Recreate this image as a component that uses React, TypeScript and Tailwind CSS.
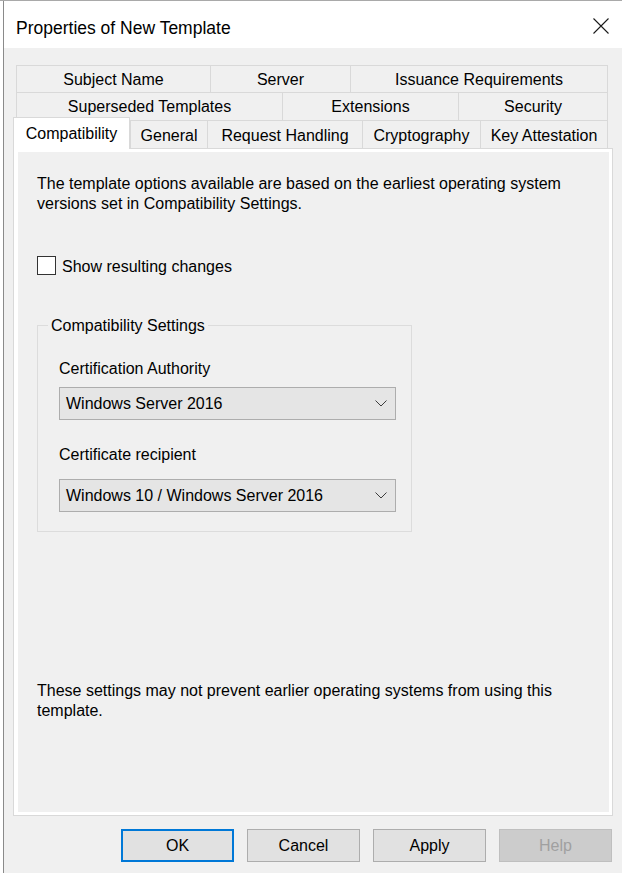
import React from 'react';

const font = "font-['Liberation_Sans',Arial,sans-serif]";

const rowOne = [
  { label: 'Subject Name', cls: 'w-[194px] pt-[1px]' },
  { label: 'Server', cls: 'w-[140px] pt-[1px]' },
  { label: 'Issuance Requirements', cls: 'flex-1 border-r pt-[1px]' },
];

const rowTwo = [
  { label: 'Superseded Templates', cls: 'w-[266px] pt-[1px]' },
  { label: 'Extensions', cls: 'w-[176px] pt-[1px]' },
  { label: 'Security', cls: 'flex-1 border-r pt-[1px]' },
];

const rowThree = [
  { label: 'General', cls: 'w-[77px] pt-[3px]' },
  { label: 'Request Handling', cls: 'w-[155px] pt-[3px]' },
  { label: 'Cryptography', cls: 'w-[118px] pt-[3px]' },
  { label: 'Key Attestation', cls: 'w-[128px] border-r pt-[3px]' },
];

const Tab = ({ label, cls }: { label: string; cls: string }) => (
  <div className={`flex items-center justify-center border-t border-l border-[#d9d9d9] bg-[#f0f0f0] ${cls}`}>
    {label}
  </div>
);

const Chevron = () => (
  <svg width="12" height="7" viewBox="0 0 12 7" fill="none">
    <polyline points="0.5,0.5 6,6 11.5,0.5" stroke="#3c3c3c" strokeWidth="1" />
  </svg>
);

const Select = ({ value }: { value: string }) => (
  <div className="w-[337px] h-[33px] border border-[#adadad] bg-[#e5e5e5] flex items-center justify-between pl-[6px] pr-[8px]">
    <span>{value}</span>
    <Chevron />
  </div>
);

const Button = ({ label, cls }: { label: string; cls: string }) => (
  <div className={`w-[113px] h-[33px] flex items-center justify-center ${cls}`}>{label}</div>
);

export default function App() {
  return (
    <div className={`w-[622px] h-[873px] flex border-t border-[#a9a9a9] text-[16px] leading-[20px] text-black ${font}`}>
      {/* strip of whatever is behind the window */}
      <div className="w-[3px] bg-white border-r border-[#8a8a8a] box-content" />

      <div className="flex-1 flex flex-col">
        {/* TITLE BAR */}
        <div className="h-[47px] bg-white flex items-start justify-between pl-[12px] pr-[13px] pt-[15px]">
          <span className="text-[17.5px] leading-[24px]">Properties of New Template</span>
          <svg width="16" height="16" viewBox="0 0 16 16" className="mt-[2px]">
            <path d="M0.5 0.5 L15.5 15.5 M15.5 0.5 L0.5 15.5" stroke="#1a1a1a" strokeWidth="1.1" />
          </svg>
        </div>

        {/* BODY */}
        <div className="flex-1 bg-[#f0f0f0] flex flex-col pt-[17px]">
          <div className="flex h-[27px] ml-[12px] w-[592px]">
            {rowOne.map((t) => <Tab key={t.label} {...t} />)}
          </div>
          <div className="flex h-[28px] ml-[12px] w-[592px]">
            {rowTwo.map((t) => <Tab key={t.label} {...t} />)}
          </div>
          <div className="flex h-[28px] ml-[9px]">
            <div className="relative z-10 w-[117px] h-[32px] -mt-[3px] bg-white border border-b-0 border-[#d9d9d9] flex items-center justify-center">
              Compatibility
            </div>
            {rowThree.map((t) => <Tab key={t.label} {...t} />)}
          </div>

          {/* TAB PANEL */}
          <div className="ml-[9px] w-[600px] h-[668px] border border-[#d9d9d9] bg-white pt-[3px] pl-[4px] pr-[3px] pb-[3px] flex">
            <div className="flex-1 bg-[#f0f0f0] flex flex-col pl-[19px] pt-[22px]">
              <p className="w-[565px]">
                The template options available are based on the earliest operating system versions set in
                Compatibility Settings.
              </p>

              <div className="mt-[41px] h-[20px] flex items-center gap-[6px]">
                <div className="w-[19px] h-[19px] border border-[#333333] bg-white" />
                <span className="pt-[3px]">Show resulting changes</span>
              </div>

              <fieldset className="mt-[39px] w-[375px] border border-[#dcdcdc]">
                <legend className="ml-[10px] px-[3px] pt-[2px]">Compatibility Settings</legend>
                <div className="pl-[21px] pt-[23px] pb-[19px] flex flex-col">
                  <span>Certification Authority</span>
                  <div className="mt-[8px]">
                    <Select value="Windows Server 2016" />
                  </div>
                  <span className="mt-[25px]">Certificate recipient</span>
                  <div className="mt-[14px]">
                    <Select value="Windows 10 / Windows Server 2016" />
                  </div>
                </div>
              </fieldset>

              <p className="mt-auto mb-[91px] w-[565px]">
                These settings may not prevent earlier operating systems from using this template.
              </p>
            </div>
          </div>

          {/* BUTTONS */}
          <div className="mt-[13px] ml-[117px] flex gap-[13px]">
            <Button label="OK" cls="border-2 border-[#0078d7] bg-[#e1e1e1]" />
            <Button label="Cancel" cls="border border-[#adadad] bg-[#e1e1e1]" />
            <Button label="Apply" cls="border border-[#adadad] bg-[#e1e1e1]" />
            <Button label="Help" cls="border border-[#bfbfbf] bg-[#cccccc] text-[#a0a0a0]" />
          </div>
        </div>
      </div>
    </div>
  );
}
